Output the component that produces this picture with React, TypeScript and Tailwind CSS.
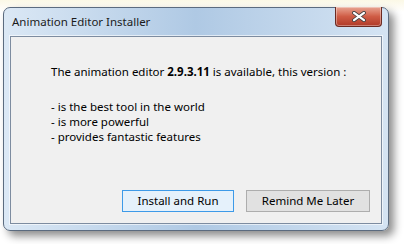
import React from 'react';

const font = { fontFamily: '"Noto Sans", "Open Sans", sans-serif' };

const CloseGlyph = () => (
    <svg width="14" height="11" viewBox="0 0 14 11">
        <path
            d="M2 1.8 L12 9.2 M12 1.8 L2 9.2"
            stroke="#3f3f3f"
            strokeWidth="3.8"
            strokeLinecap="round"
        />
        <path
            d="M2 1.8 L12 9.2 M12 1.8 L2 9.2"
            stroke="#ffffff"
            strokeWidth="2.2"
            strokeLinecap="round"
        />
    </svg>
);

export default function App() {
    return (
        <div
            className="w-[404px] h-[244px] bg-gradient-to-b from-[#fbf8e6] to-white to-[12px] pt-[7px] pl-[3px] overflow-hidden"
            style={font}
        >
            <div className="relative w-[386px] h-[224px] rounded-[7px] border border-[#5b6b7f] bg-gradient-to-r from-[#dbe8f5] via-[#afc9e4] to-[#d5e4f3] shadow-[5px_5px_9px_rgba(0,0,0,0.45)] flex flex-col">
                {/* title bar */}
                <div className="h-[28px] flex items-center pl-[8px] text-[11.5px] text-[#1b1b1b]">
                    Animation Editor Installer
                </div>

                {/* close button */}
                <div className="absolute top-[-1px] right-[6px] w-[47px] h-[20px] rounded-b-[4px] border border-[#6b2a22] border-t-0 bg-gradient-to-b from-[#e8a593] via-[#cf5c45] to-[#b03a28] flex items-center justify-center shadow-[inset_0_0_0_1px_rgba(255,255,255,0.35)]">
                    <CloseGlyph />
                </div>

                {/* content panel */}
                <div className="mx-[6px] mb-[6px] flex-1 border border-[#7d8ca0] bg-[#f0f0f0] flex flex-col shadow-[0_0_0_1px_rgba(255,255,255,0.6)]">
                    <div className="pl-[40px] pt-[27px] text-[11.5px] leading-[15px] text-black">
                        <p>
                            The animation editor <b>2.9.3.11</b> is available, this version :
                        </p>
                        <p className="mt-[20px]">- is the best tool in the world</p>
                        <p>- is more powerful</p>
                        <p>- provides fantastic features</p>
                    </div>

                    <div className="mt-auto flex justify-end gap-[12px] pr-[11px] pb-[11px] text-[11.5px] text-black">
                        <button className="w-[112px] h-[22px] border border-[#3d9ae8] bg-[#e5f1fb]">
                            Install and Run
                        </button>
                        <button className="w-[124px] h-[22px] border border-[#adadad] bg-[#e1e1e1]">
                            Remind Me Later
                        </button>
                    </div>
                </div>
            </div>
        </div>
    );
}
